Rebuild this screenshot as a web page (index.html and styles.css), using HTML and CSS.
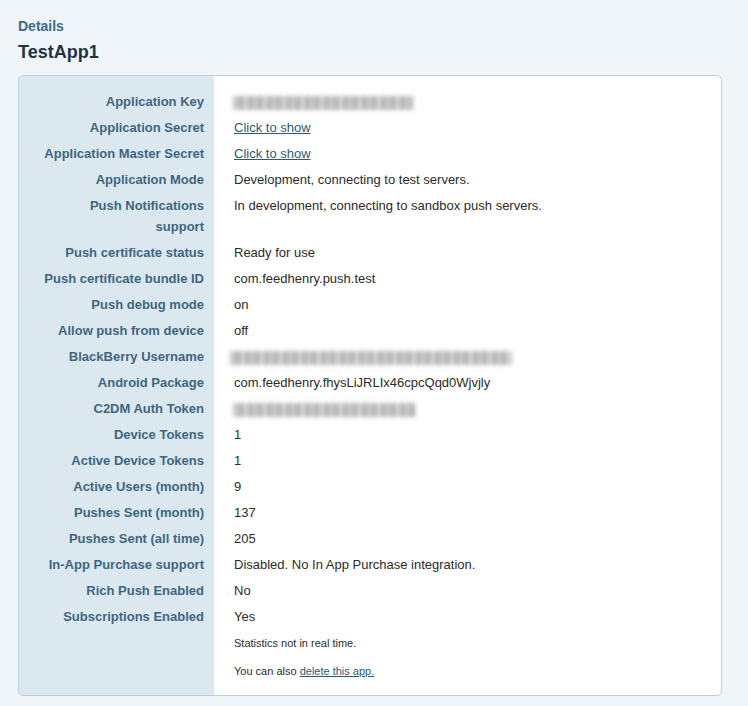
FILE: index.html
```html
<!DOCTYPE html>
<html>
<head>
<meta charset="utf-8">
<link rel="stylesheet" href="styles.css">
</head>
<body>
<h2 class="section">Details</h2>
<h1 class="title">TestApp1</h1>
<div class="card">
  <div class="grid">
    <div class="label">Application Key</div><div class="value"><span class="blur" style="width:180px"></span></div>
    <div class="label">Application Secret</div><div class="value"><a href="#">Click to show</a></div>
    <div class="label">Application Master Secret</div><div class="value"><a href="#">Click to show</a></div>
    <div class="label">Application Mode</div><div class="value">Development, connecting to test servers.</div>
    <div class="label">Push Notifications support</div><div class="value">In development, connecting to sandbox push servers.</div>
    <div class="label">Push certificate status</div><div class="value">Ready for use</div>
    <div class="label">Push certificate bundle ID</div><div class="value">com.feedhenry.push.test</div>
    <div class="label">Push debug mode</div><div class="value">on</div>
    <div class="label">Allow push from device</div><div class="value">off</div>
    <div class="label">BlackBerry Username</div><div class="value"><span class="blur wide" style="width:282px"></span></div>
    <div class="label">Android Package</div><div class="value">com.feedhenry.fhysLiJRLIx46cpcQqd0Wjvjly</div>
    <div class="label">C2DM Auth Token</div><div class="value"><span class="blur" style="width:183px"></span></div>
    <div class="label">Device Tokens</div><div class="value">1</div>
    <div class="label">Active Device Tokens</div><div class="value">1</div>
    <div class="label">Active Users (month)</div><div class="value">9</div>
    <div class="label">Pushes Sent (month)</div><div class="value">137</div>
    <div class="label">Pushes Sent (all time)</div><div class="value">205</div>
    <div class="label">In-App Purchase support</div><div class="value">Disabled. No In App Purchase integration.</div>
    <div class="label">Rich Push Enabled</div><div class="value">No</div>
    <div class="label">Subscriptions Enabled</div><div class="value">Yes</div>
    <div class="label"></div><div class="value note">Statistics not in real time.</div>
    <div class="label"></div><div class="value note last">You can also <a href="#">delete this app.</a></div>
  </div>
</div>
</body>
</html>
```

FILE: styles.css
```css
html, body {
  margin: 0;
  padding: 0;
  background: #f0f5fa;
}
body {
  padding: 17px 26px 10px 18px;
  font-family: "Liberation Sans", Arial, Helvetica, sans-serif;
}
.section {
  margin: 0;
  font-size: 14px;
  line-height: 18px;
  font-weight: bold;
  color: #3b6b8b;
}
.title {
  margin: 6px 0 0 0;
  font-size: 18px;
  line-height: 22px;
  font-weight: bold;
  color: #1e3445;
}
.card {
  margin-top: 12px;
  width: 702px;
  border: 1px solid #bccfdb;
  border-radius: 5px;
  background: linear-gradient(to right, #dce8f0 195px, #ffffff 195px);
  overflow: hidden;
}
.grid {
  display: grid;
  grid-template-columns: 195px 1fr;
  padding: 13px 0 9px 0;
}
.label, .value {
  padding: 2px 0 3px 0;
  font-size: 13px;
  line-height: 21px;
}
.label {
  padding-right: 10px;
  padding-left: 20px;
  text-align: right;
  font-weight: bold;
  font-size: 13px;
  color: #3c6783;
}
.value {
  padding-left: 20px;
  color: #2b2b2b;
}
.value a {
  color: #2f5873;
  text-decoration: underline;
}
.note {
  font-size: 11px;
  padding-top: 3px;
  padding-bottom: 4px;
}
.blur {
  display: inline-block;
  height: 14px;
  vertical-align: middle;
  background: repeating-linear-gradient(to right, #c6c6c6 0 7px, #a9a9a9 7px 10px, #d6d6d6 10px 15px, #b2b2b2 15px 19px);
  filter: blur(2px);
  margin-left: -1px;
}
.wide {
  margin-left: -4px;
}
```
